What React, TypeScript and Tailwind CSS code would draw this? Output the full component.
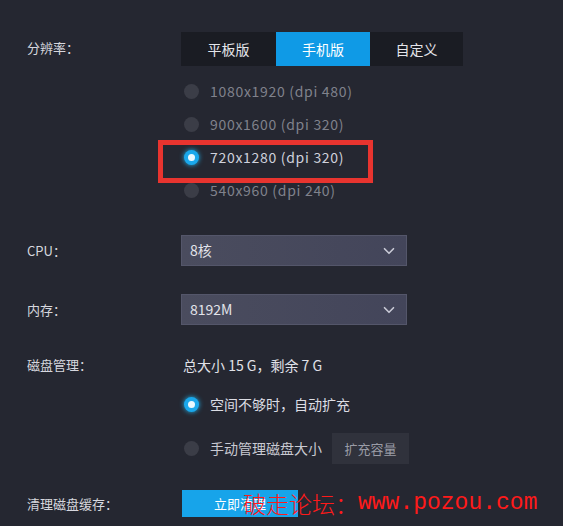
import { ChevronDown } from "lucide-react";

const FONT = { fontFamily: '"Noto Sans CJK SC", "Noto Sans", sans-serif' };

const RESOLUTIONS = [
  { id: "r1", label: "1080x1920 (dpi 480)" },
  { id: "r2", label: "900x1600 (dpi 320)" },
  { id: "r3", label: "720x1280 (dpi 320)", checked: true },
  { id: "r4", label: "540x960 (dpi 240)" },
];

function Radio({ checked }: { checked?: boolean }) {
  return checked ? (
    <div className="w-[15px] h-[15px] shrink-0 rounded-full bg-[#1aa8ec] flex items-center justify-center shadow-[0_0_5px_#22b6f0]">
      <div className="w-[7px] h-[7px] rounded-full bg-[#e8f8ff]" />
    </div>
  ) : (
    <div className="w-[15px] h-[15px] shrink-0 rounded-full bg-[#3b3d47]" />
  );
}

function Select({ value }: { value: string }) {
  return (
    <div className="w-[226px] h-[31px] bg-gradient-to-r from-[#4a4c5e] to-[#43455a] border border-[#54566a] flex items-center justify-between pl-[8px] pr-[8px] text-[14px] text-[#e2e3ea]">
      <span>{value}</span>
      <ChevronDown className="w-[18px] h-[18px] text-[#c9cad6]" strokeWidth={2.2} />
    </div>
  );
}

export default function App() {
  return (
    <div
      style={FONT}
      className="relative w-[563px] h-[526px] overflow-hidden bg-[#252731] pl-[27px] pt-[32px] text-[13px] text-[#d6d7de]"
    >
      {/* 分辨率 */}
      <div className="flex">
        <div className="w-[154px] pt-[6px]">分辨率：</div>
        <div className="flex h-[34px] bg-[#1a1c23] text-[14px]">
          <div className="w-[95px] flex items-center justify-center text-[#e4e5ea]">平板版</div>
          <div className="w-[94px] flex items-center justify-center bg-[#0f9ae6] text-white">手机版</div>
          <div className="w-[93px] flex items-center justify-center text-[#e4e5ea]">自定义</div>
        </div>
      </div>

      <div className="ml-[154px] mt-[9px] flex flex-col">
        {RESOLUTIONS.map((r) => (
          <div key={r.id} className="relative h-[33px] flex items-center gap-[11px] pl-[3px]">
            <Radio checked={r.checked} />
            <span className={`text-[14px] tracking-[0.7px] ${r.checked ? "text-[#cfd1dc]" : "text-[#80828c]"}`}>
              {r.label}
            </span>
            {r.checked && (
              <div className="absolute left-[-23px] top-[-1px] w-[215px] h-[43px] border-[5px] border-[#e8342f]" />
            )}
          </div>
        ))}
      </div>

      {/* CPU */}
      <div className="flex items-center mt-[28px]">
        <div className="w-[154px]">CPU：</div>
        <Select value="8核" />
      </div>

      {/* 内存 */}
      <div className="flex items-center mt-[28px]">
        <div className="w-[154px]">内存：</div>
        <Select value="8192M" />
      </div>

      {/* 磁盘管理 */}
      <div className="flex mt-[30px]">
        <div className="w-[154px]">磁盘管理：</div>
        <div className="flex flex-col text-[14px]">
          <div className="pl-[2px] text-[#e0e1e8]">总大小 15 G，剩余 7 G</div>
          <div className="flex items-center gap-[11px] mt-[18px] pl-[3px]">
            <Radio checked />
            <span className="text-[#dcdde4]">空间不够时，自动扩充</span>
          </div>
          <div className="flex items-center gap-[11px] mt-[18px] pl-[3px]">
            <Radio />
            <span className="text-[#c9cad2]">手动管理磁盘大小</span>
            <div className="w-[77px] h-[31px] bg-[#30323c] flex items-center justify-center text-[13px] text-[#9a9ca6] -ml-[1px]">
              扩充容量
            </div>
          </div>
        </div>
      </div>

      {/* 清理磁盘缓存 */}
      <div className="flex items-center mt-[26px]">
        <div className="w-[155px]">清理磁盘缓存：</div>
        <div className="w-[116px] h-[27px] bg-[#17a4ea] flex items-center justify-center text-white text-[13px]">
          立即清理
        </div>
      </div>

      {/* watermark */}
      <div
        className="absolute left-[243px] top-[492px] text-[23px] leading-none text-[#ff1a1a] flex"
        style={{ fontFamily: '"Liberation Mono", "Noto Sans CJK SC", monospace' }}
      >
        <span style={{ fontFamily: '"Noto Sans CJK SC", serif' }} className="font-light">破走论坛：</span>
        <span>www.pozou.com</span>
      </div>
    </div>
  );
}
